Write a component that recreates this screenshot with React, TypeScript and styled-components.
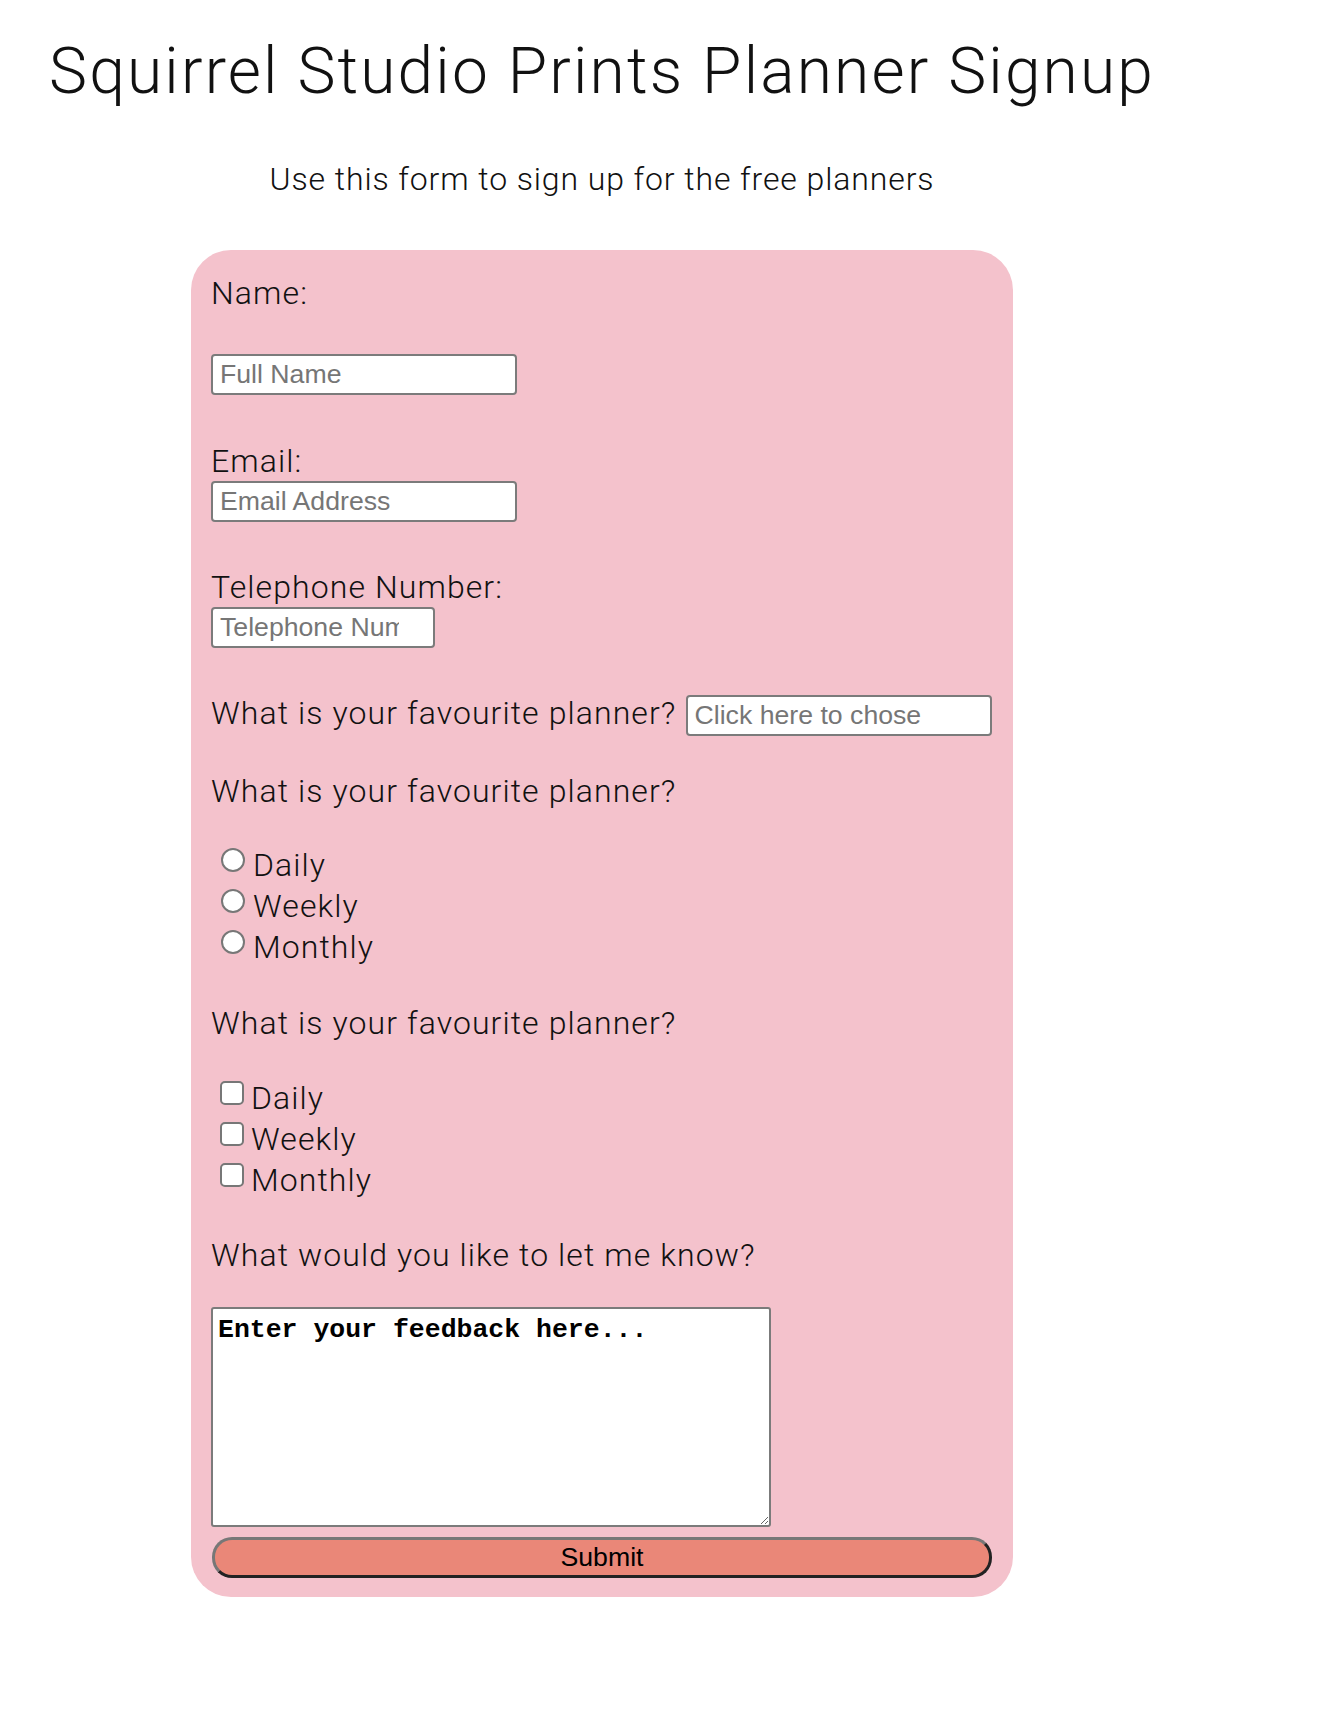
import React from "react";
import styled, { createGlobalStyle } from "styled-components";

const GlobalStyle = createGlobalStyle`
  html, body {
    margin: 0;
    padding: 0;
    background: #ffffff;
  }
  body {
    font-family: "Roboto Slab", Roboto, "Liberation Serif", serif;
    font-weight: 300;
    color: #111111;
  }
`;

const Page = styled.main`
  width: 1204px;
  padding: 34px 0 119px;
  text-align: center;
`;

const Title = styled.h1`
  margin: 0;
  font-size: 64px;
  line-height: 76px;
  font-weight: 300;
  letter-spacing: 0.034em;
`;

const Subtitle = styled.p`
  margin: 49px 0 0;
  font-size: 32px;
  line-height: 40px;
  font-weight: 300;
  letter-spacing: 0.028em;
`;

const Form = styled.form`
  box-sizing: border-box;
  width: 822px;
  margin: 51px auto 0;
  padding: 23px 21px 19px 20px;
  background: #f4c2cc;
  border-radius: 40px;
  text-align: left;
  display: flex;
  flex-direction: column;
  align-items: flex-start;
`;

const Label = styled.label<{ $gap?: number }>`
  display: block;
  margin-top: ${(p) => p.$gap ?? 0}px;
  font-size: 32px;
  line-height: 40px;
  font-weight: 300;
  letter-spacing: 0.034em;
  white-space: nowrap;
`;

const TextInput = styled.input<{ $width: number; $gap?: number; $padRight?: number }>`
  box-sizing: border-box;
  width: ${(p) => p.$width}px;
  height: 41px;
  margin: ${(p) => p.$gap ?? 0}px 0 0;
  padding: 1px ${(p) => p.$padRight ?? 7}px 1px 7px;
  border: 2px solid #7b7b7b;
  border-radius: 4px;
  background: #ffffff;
  font-family: "Liberation Sans", Arial, sans-serif;
  font-size: 26.67px;
  color: #111;
  outline: none;
  &::placeholder {
    color: #767676;
  }
`;

const InlineRow = styled.div<{ $gap?: number }>`
  display: flex;
  align-items: baseline;
  gap: 9px;
  margin-top: ${(p) => p.$gap ?? 0}px;
`;

const OptionGroup = styled.div<{ $gap?: number }>`
  display: flex;
  flex-direction: column;
  margin-top: ${(p) => p.$gap ?? 0}px;
`;

const OptionRow = styled.label`
  display: flex;
  align-items: flex-start;
  height: 41px;
  font-size: 32px;
  line-height: 41px;
  font-weight: 300;
  letter-spacing: 0.034em;
`;

const Radio = styled.input`
  appearance: none;
  box-sizing: border-box;
  width: 24px;
  height: 24px;
  margin: 3px 8px 0 10px;
  border: 2px solid #777777;
  border-radius: 50%;
  background: #ffffff;
`;

const Checkbox = styled.input`
  appearance: none;
  box-sizing: border-box;
  width: 24px;
  height: 24px;
  margin: 3px 7px 0 9px;
  border: 2px solid #777777;
  border-radius: 5px;
  background: #ffffff;
`;

const Feedback = styled.textarea<{ $gap?: number }>`
  box-sizing: border-box;
  width: 560px;
  height: 220px;
  margin-top: ${(p) => p.$gap ?? 0}px;
  padding: 6px 5px;
  border: 2px solid #7b7b7b;
  border-radius: 3px;
  background: #ffffff;
  font-family: "Liberation Mono", "Courier New", monospace;
  font-weight: 700;
  font-size: 26.5px;
  line-height: 30px;
  color: #000;
  outline: none;
`;

const SubmitButton = styled.button`
  box-sizing: border-box;
  width: 780px;
  height: 41px;
  margin: 10px 0 0 1px;
  padding: 0;
  border-width: 3px;
  border-style: solid;
  border-color: #777777 #222222 #222222 #777777;
  border-radius: 20px;
  background: #ea8778;
  font-family: "Liberation Sans", Arial, sans-serif;
  font-size: 26.67px;
  color: #000;
  cursor: pointer;
`;

const planners = ["Daily", "Weekly", "Monthly"];

export default function App() {
  return (
    <>
      <GlobalStyle />
      <Page>
        <Title>Squirrel Studio Prints Planner Signup</Title>
        <Subtitle>Use this form to sign up for the free planners</Subtitle>
        <Form onSubmit={(e) => e.preventDefault()}>
          <Label htmlFor="name">Name:</Label>
          <TextInput id="name" $width={306} $gap={41} placeholder="Full Name" />

          <Label htmlFor="email" $gap={46}>Email:</Label>
          <TextInput id="email" $width={306} placeholder="Email Address" />

          <Label htmlFor="tel" $gap={45}>Telephone Number:</Label>
          <TextInput id="tel" $width={224} $padRight={34} placeholder="Telephone Number" />

          <InlineRow $gap={45}>
            <Label htmlFor="fav">What is your favourite planner?</Label>
            <TextInput id="fav" $width={306} placeholder="Click here to chose" />
          </InlineRow>

          <Label $gap={35}>What is your favourite planner?</Label>
          <OptionGroup $gap={34}>
            {planners.map((p) => (
              <OptionRow key={p}>
                <Radio type="radio" name="planner-radio" value={p} />
                {p}
              </OptionRow>
            ))}
          </OptionGroup>

          <Label $gap={35}>What is your favourite planner?</Label>
          <OptionGroup $gap={35}>
            {planners.map((p) => (
              <OptionRow key={p}>
                <Checkbox type="checkbox" value={p} />
                {p}
              </OptionRow>
            ))}
          </OptionGroup>

          <Label htmlFor="feedback" $gap={34}>What would you like to let me know?</Label>
          <Feedback id="feedback" $gap={32} defaultValue="Enter your feedback here..." />

          <SubmitButton type="submit">Submit</SubmitButton>
        </Form>
      </Page>
    </>
  );
}
